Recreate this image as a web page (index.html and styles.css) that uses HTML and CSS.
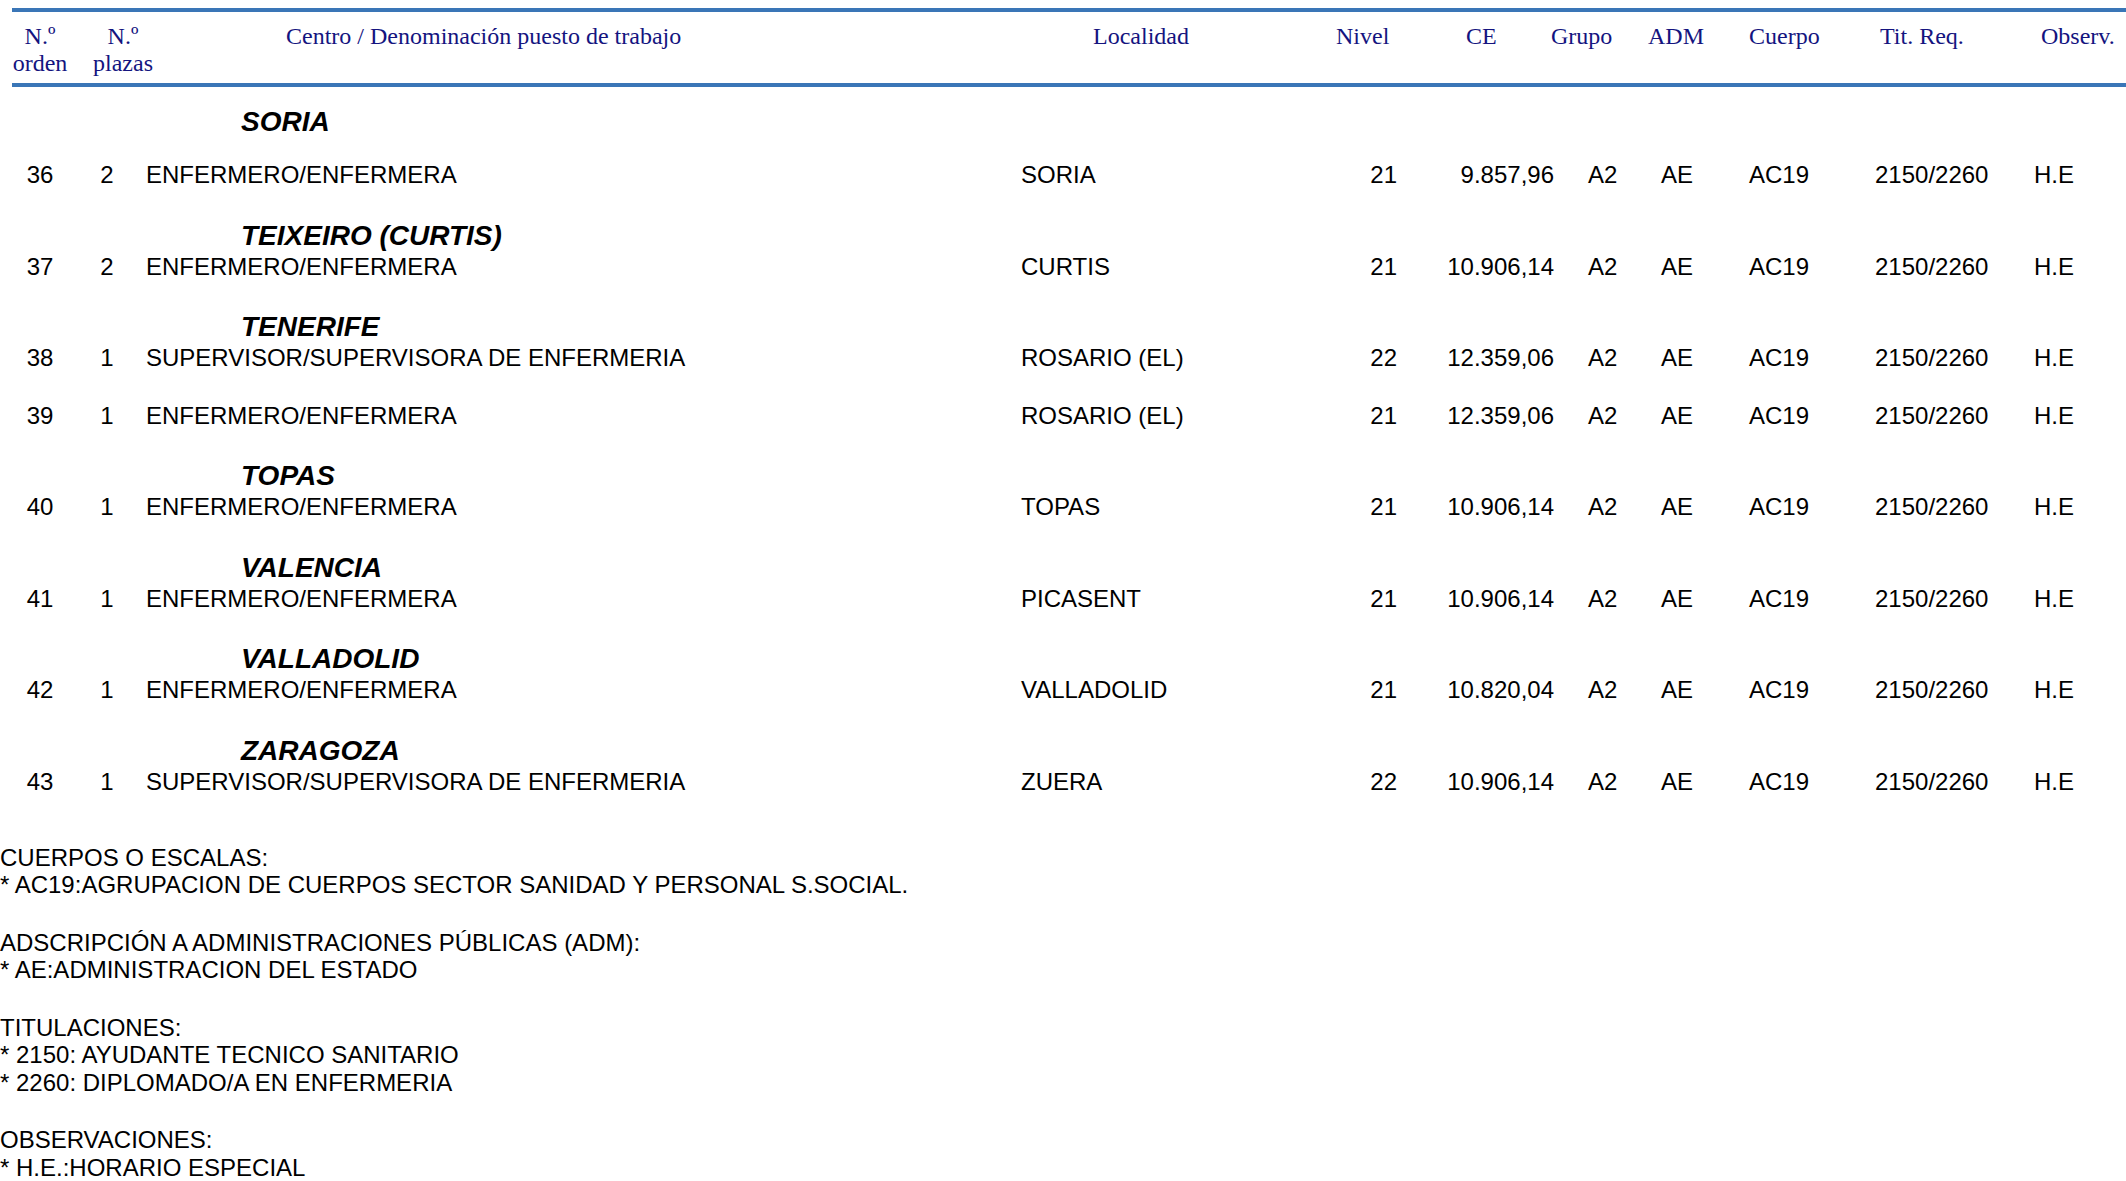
FILE: index.html
```html
<!DOCTYPE html>
<html lang="es">
<head>
<meta charset="utf-8">
<title>Puestos de trabajo</title>
<link rel="stylesheet" href="styles.css">
</head>
<body>
<div class="sheet">
  <div class="thead">
    <div class="hc c-center">N.º<br>orden</div>
    <div class="hc c-center">N.º<br>plazas</div>
    <div class="hc h-centro">Centro / Denominación puesto de trabajo</div>
    <div class="hc">Localidad</div>
    <div class="hc">Nivel</div>
    <div class="hc">CE</div>
    <div class="hc">Grupo</div>
    <div class="hc">ADM</div>
    <div class="hc">Cuerpo</div>
    <div class="hc">Tit. Req.</div>
    <div class="hc">Observ.</div>
  </div>

  <div class="tbody">
    <div class="group first">
      <div class="centre">SORIA</div>
      <div class="row">
        <div class="c-center">36</div><div class="c-center">2</div><div>ENFERMERO/ENFERMERA</div><div>SORIA</div><div class="num">21</div><div class="num ce">9.857,96</div><div>A2</div><div>AE</div><div>AC19</div><div>2150/2260</div><div>H.E</div>
      </div>
    </div>

    <div class="group">
      <div class="centre">TEIXEIRO (CURTIS)</div>
      <div class="row">
        <div class="c-center">37</div><div class="c-center">2</div><div>ENFERMERO/ENFERMERA</div><div>CURTIS</div><div class="num">21</div><div class="num ce">10.906,14</div><div>A2</div><div>AE</div><div>AC19</div><div>2150/2260</div><div>H.E</div>
      </div>
    </div>

    <div class="group">
      <div class="centre">TENERIFE</div>
      <div class="row">
        <div class="c-center">38</div><div class="c-center">1</div><div>SUPERVISOR/SUPERVISORA DE ENFERMERIA</div><div>ROSARIO (EL)</div><div class="num">22</div><div class="num ce">12.359,06</div><div>A2</div><div>AE</div><div>AC19</div><div>2150/2260</div><div>H.E</div>
      </div>
      <div class="row">
        <div class="c-center">39</div><div class="c-center">1</div><div>ENFERMERO/ENFERMERA</div><div>ROSARIO (EL)</div><div class="num">21</div><div class="num ce">12.359,06</div><div>A2</div><div>AE</div><div>AC19</div><div>2150/2260</div><div>H.E</div>
      </div>
    </div>

    <div class="group">
      <div class="centre">TOPAS</div>
      <div class="row">
        <div class="c-center">40</div><div class="c-center">1</div><div>ENFERMERO/ENFERMERA</div><div>TOPAS</div><div class="num">21</div><div class="num ce">10.906,14</div><div>A2</div><div>AE</div><div>AC19</div><div>2150/2260</div><div>H.E</div>
      </div>
    </div>

    <div class="group">
      <div class="centre">VALENCIA</div>
      <div class="row">
        <div class="c-center">41</div><div class="c-center">1</div><div>ENFERMERO/ENFERMERA</div><div>PICASENT</div><div class="num">21</div><div class="num ce">10.906,14</div><div>A2</div><div>AE</div><div>AC19</div><div>2150/2260</div><div>H.E</div>
      </div>
    </div>

    <div class="group">
      <div class="centre">VALLADOLID</div>
      <div class="row">
        <div class="c-center">42</div><div class="c-center">1</div><div>ENFERMERO/ENFERMERA</div><div>VALLADOLID</div><div class="num">21</div><div class="num ce">10.820,04</div><div>A2</div><div>AE</div><div>AC19</div><div>2150/2260</div><div>H.E</div>
      </div>
    </div>

    <div class="group">
      <div class="centre">ZARAGOZA</div>
      <div class="row">
        <div class="c-center">43</div><div class="c-center">1</div><div>SUPERVISOR/SUPERVISORA DE ENFERMERIA</div><div>ZUERA</div><div class="num">22</div><div class="num ce">10.906,14</div><div>A2</div><div>AE</div><div>AC19</div><div>2150/2260</div><div>H.E</div>
      </div>
    </div>
  </div>
</div>

<div class="notes">
  <p>CUERPOS O ESCALAS:<br>* AC19:AGRUPACION DE CUERPOS SECTOR SANIDAD Y PERSONAL S.SOCIAL.</p>
  <p>ADSCRIPCIÓN A ADMINISTRACIONES PÚBLICAS (ADM):<br>* AE:ADMINISTRACION DEL ESTADO</p>
  <p>TITULACIONES:<br>* 2150: AYUDANTE TECNICO SANITARIO<br>* 2260: DIPLOMADO/A EN ENFERMERIA</p>
  <p>OBSERVACIONES:<br>* H.E.:HORARIO ESPECIAL</p>
</div>
</body>
</html>
```

FILE: styles.css
```css
html, body {
  margin: 0;
  padding: 0;
  background: #ffffff;
}

body {
  font-family: "Liberation Sans", Arial, sans-serif;
  font-size: 24px;
  color: #000000;
  overflow: hidden;
}

.sheet {
  margin: 8px 0 0 12px;
}

.thead {
  display: grid;
  grid-template-columns: 56px 110px 915px 243px 130px 85px 97px 101px 131px 161px 1fr;
  border-top: 4px solid #3a76b7;
  border-bottom: 4px solid #3a76b7;
  padding: 11px 0 6px 0;
  font-family: "Liberation Serif", "Times New Roman", serif;
  color: #14147f;
  line-height: 27px;
}

.hc {
  white-space: nowrap;
}

.c-center {
  text-align: center;
}

.h-centro {
  padding-left: 108px;
}

.tbody {
  padding-top: 18px;
}

.centre {
  font-weight: bold;
  font-style: italic;
  font-size: 28px;
  line-height: 34px;
  padding-left: 229px;
}

.group.first .centre {
  margin-bottom: 22px;
}

.row {
  display: grid;
  grid-template-columns: 56px 78px 875px 279px 97px 191px 73px 88px 126px 159px 1fr;
  line-height: 28px;
  margin-bottom: 29.5px;
  white-space: nowrap;
}

.num {
  text-align: right;
}

.ce {
  padding-right: 34px;
}

.notes {
  margin-top: 48px;
  line-height: 27.5px;
}

.notes p {
  margin: 0 0 30px 0;
}
```
